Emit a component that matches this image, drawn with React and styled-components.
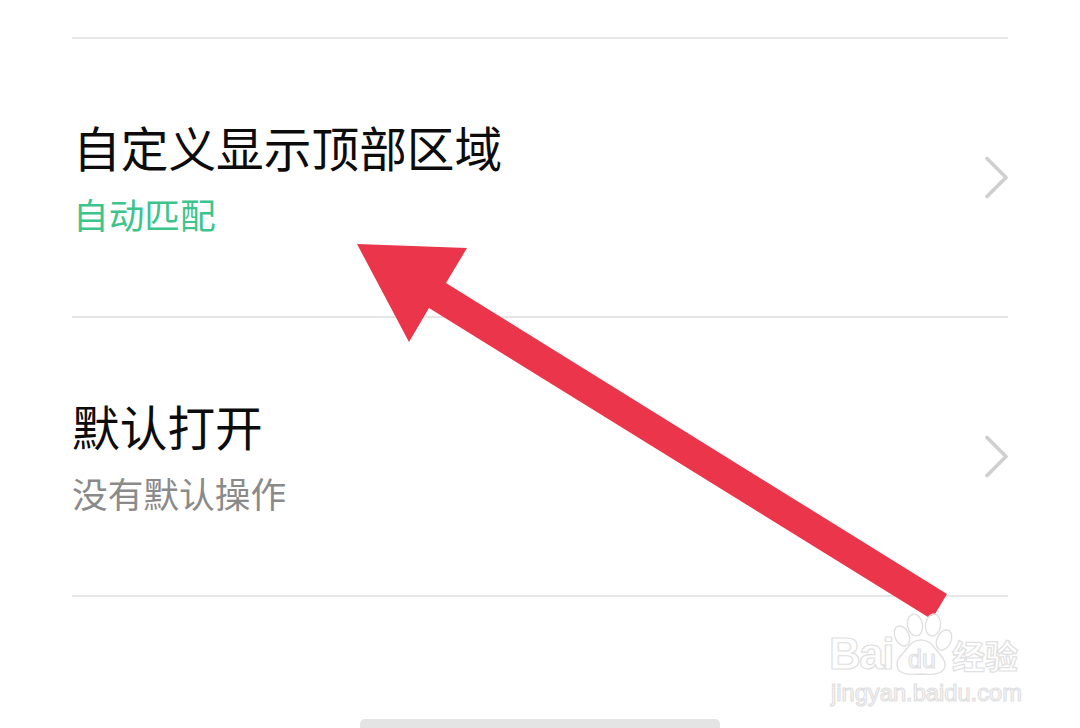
import React from "react";
import styled, { createGlobalStyle } from "styled-components";

const Global = createGlobalStyle`
  html, body { margin: 0; padding: 0; background: #fff; }
  body { width: 1080px; height: 728px; overflow: hidden; font-family: "Noto Sans CJK SC", "Noto Sans", sans-serif; }
`;

const Page = styled.div`
  position: relative;
  width: 1080px;
  height: 728px;
  padding-top: 37px;
  box-sizing: border-box;
  display: flex;
  flex-direction: column;
  overflow: hidden;
  background: #fff;
`;

const List = styled.div`
  margin: 0 72px;
  border-top: 2px solid #e6e6e6;
`;

const Row = styled.div`
  height: 277px;
  border-bottom: 2px solid #e6e6e6;
  display: flex;
  align-items: center;
  justify-content: space-between;
`;

const Texts = styled.div`
  display: flex;
  flex-direction: column;
  gap: ${(p) => p.$gap}px;
  padding-left: ${(p) => p.$inset}px;
  margin-top: -1px;
`;

const Title = styled.div`
  font-size: 47.7px;
  line-height: 58px;
  font-weight: 400;
  color: #0c0c0c;
  white-space: nowrap;
`;

const Sub = styled.div`
  font-size: ${(p) => p.$size}px;
  line-height: 46px;
  font-weight: 400;
  color: ${(p) => p.$color};
  white-space: nowrap;
`;

const ChevronBox = styled.svg`
  width: 26px;
  height: 44px;
  margin-right: -1px;
  flex: none;
`;

const Chevron = () => (
  <ChevronBox viewBox="0 0 26 44">
    <path d="M4 2.5 L23 21.5 L4 40.5" fill="none" stroke="#cfcfcf" strokeWidth="3.6" strokeLinecap="round" strokeLinejoin="round" />
  </ChevronBox>
);

const HomeBar = styled.div`
  align-self: center;
  margin-top: auto;
  width: 360px;
  height: 9px;
  border-radius: 5px 5px 0 0;
  background: #e4e4e4;
`;

const ArrowSvg = styled.svg`
  position: absolute;
  left: 0;
  top: 0;
  width: 1080px;
  height: 728px;
  pointer-events: none;
`;

const Watermark = styled.div`
  position: absolute;
  left: 829px;
  top: 612px;
  width: 200px;
  height: 96px;
`;

const PawSvg = styled.svg`
  position: absolute;
  left: 0;
  top: 0;
  width: 200px;
  height: 96px;
`;

const outlined = `
  position: absolute;
  color: #fff;
  -webkit-text-stroke: 1.2px #e0e0e0;
  white-space: nowrap;
  font-family: "Liberation Sans", sans-serif;
`;

const BaiText = styled.div`
  ${outlined}
  left: 0;
  top: 20px;
  font-size: 44px;
  line-height: 44px;
  font-weight: 700;
  letter-spacing: -1.5px;
`;

const DuText = styled.div`
  ${outlined}
  left: 79px;
  top: 35px;
  font-size: 25px;
  line-height: 24px;
`;

const JingText = styled.div`
  ${outlined}
  left: 2px;
  top: 67px;
  font-size: 23.7px;
  line-height: 28px;
`;

const CnText = styled.div`
  ${outlined}
  left: 123px;
  top: 22px;
  font-size: 33px;
  line-height: 42px;
  font-weight: 700;
  font-family: "Noto Sans CJK SC", sans-serif;
`;

export default function App() {
  return (
    <Page>
      <Global />
      <List>
        <Row>
          <Texts $gap={15} $inset={1}>
            <Title>自定义显示顶部区域</Title>
            <Sub $size={35.7} $color="#3cc48c">自动匹配</Sub>
          </Texts>
          <Chevron />
        </Row>
        <Row>
          <Texts $gap={15} $inset={0}>
            <Title>默认打开</Title>
            <Sub $size={35.7} $color="#8a8a8a">没有默认操作</Sub>
          </Texts>
          <Chevron />
        </Row>
      </List>
      <HomeBar />
      <ArrowSvg viewBox="0 0 1080 728">
        <polygon points="357,244 467,248 446,283 947,594 935,614 928,617 429,308 409,342" fill="#ea354b" />
      </ArrowSvg>
      <Watermark>
        <BaiText>Bai</BaiText>
        <PawSvg viewBox="0 0 200 96">
          <g fill="none" stroke="#e0e0e0" strokeWidth="1.4">
            <ellipse cx="86" cy="13" rx="7.5" ry="11" transform="rotate(-10 86 13)" />
            <ellipse cx="104" cy="13" rx="7.5" ry="11" transform="rotate(8 104 13)" />
            <ellipse cx="73" cy="24" rx="7" ry="10.5" transform="rotate(-25 73 24)" />
            <ellipse cx="115" cy="28" rx="7" ry="10.5" transform="rotate(25 115 28)" />
            <path d="M92 28 C82 28 80 35 74 41 C69 46 66 51 69 57 C72 63 82 63 92 62 C102 63 112 63 115 57 C118 51 114 46 110 41 C104 35 102 28 92 28 Z" />
          </g>
        </PawSvg>
        <DuText>du</DuText>
        <CnText>经验</CnText>
        <JingText>jingyan.baidu.com</JingText>
      </Watermark>
    </Page>
  );
}
